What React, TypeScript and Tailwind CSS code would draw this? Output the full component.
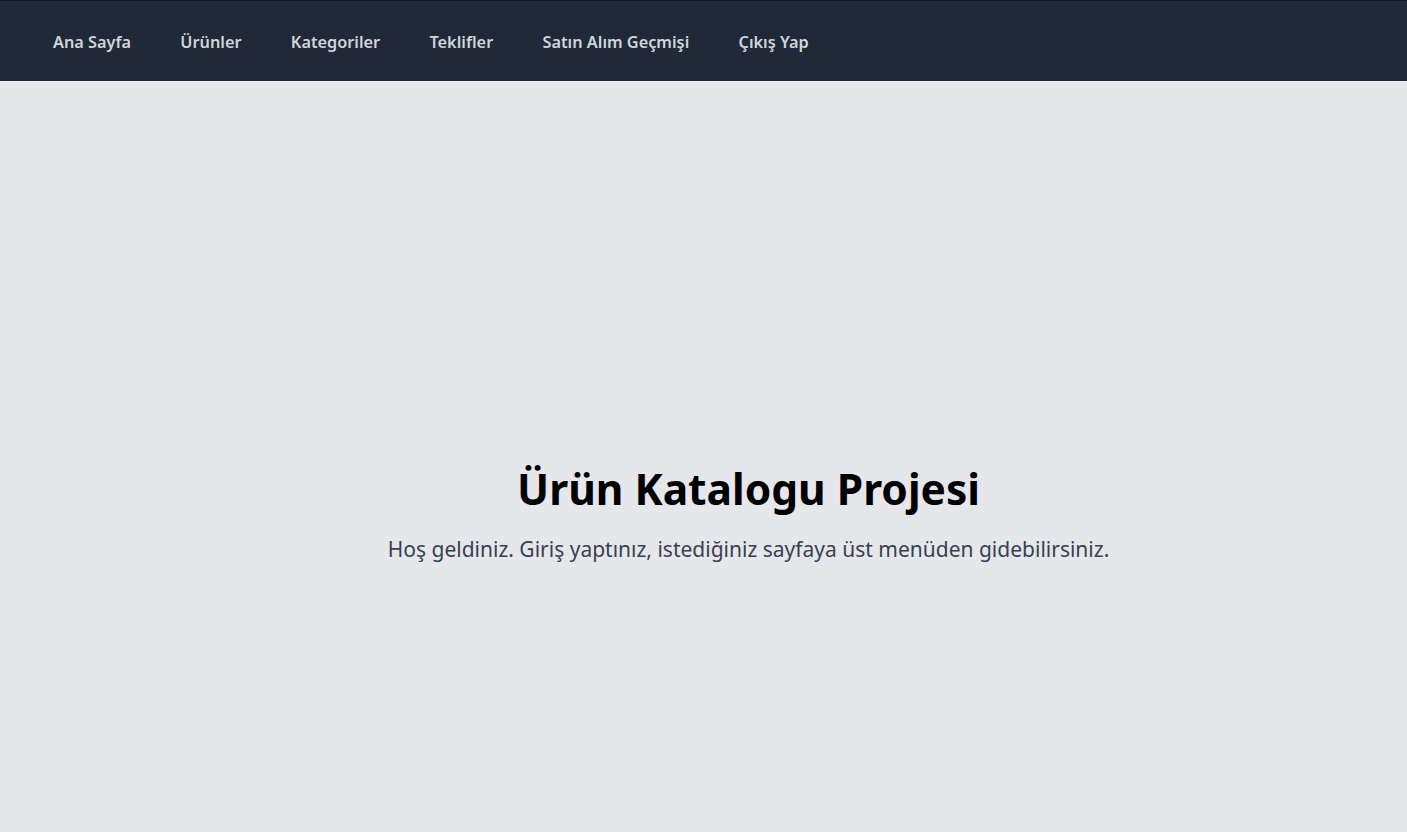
import React from "react";

export default function App() {
  const links = ["Ana Sayfa", "Ürünler", "Kategoriler", "Teklifler", "Satın Alım Geçmişi", "Çıkış Yap"];
  return (
    <div className="min-h-screen bg-[#e5e7eb] flex flex-col" style={{ fontFamily: '"Noto Sans", "Open Sans", sans-serif' }}>
      <nav className="h-[81px] bg-[#1f2937] border-t border-[#111827] flex items-center pl-[53px] pt-[3px] gap-[49.3px]">
        {links.map((l) => (
          <a key={l} href="#" className="text-[#d1d5db] text-[16.3px] font-semibold">
            {l}
          </a>
        ))}
      </nav>
      <main className="flex-1 flex flex-col items-center justify-center pt-[134px] pb-[20px] pl-[90px]">
        <h1 className="text-[42.5px] leading-[52px] font-bold text-black">Ürün Katalogu Projesi</h1>
        <p className="mt-[19px] text-[21px] leading-[30px] text-[#374151]">
          Hoş geldiniz. Giriş yaptınız, istediğiniz sayfaya üst menüden gidebilirsiniz.
        </p>
      </main>
    </div>
  );
}
